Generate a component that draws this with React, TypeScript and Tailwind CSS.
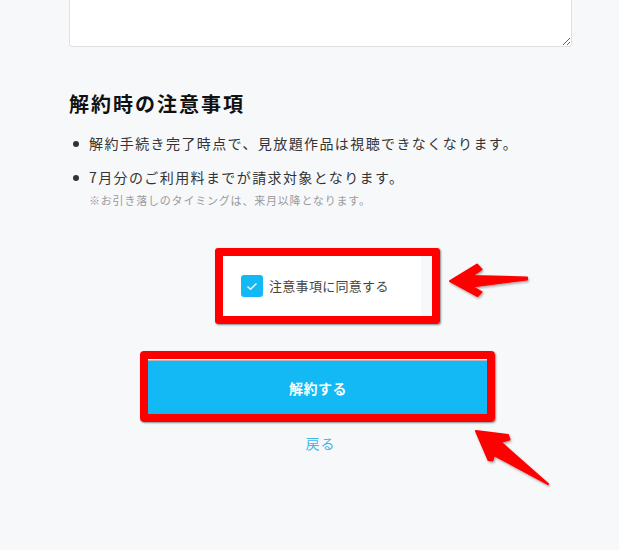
import React from 'react';

const font = { fontFamily: '"Noto Sans CJK JP", "Noto Sans", sans-serif' };

const Arrows = () => (
    <svg className="absolute left-0 top-0 pointer-events-none" width="619" height="550" viewBox="0 0 619 550">
        <defs>
            <filter id="sh" x="-20%" y="-20%" width="140%" height="140%">
                <feDropShadow dx="1" dy="1.5" stdDeviation="1" floodColor="#000" floodOpacity="0.35" />
            </filter>
        </defs>
        {/* arrow pointing to the checkbox */}
        <path
            d="M450 281 L477 264.5 L481.5 269.5 L472 276 L527 277.5 L527 279.5 L472 286.5 L481.5 292 L477.5 296 Z"
            fill="#ff0000"
            stroke="#ff0000"
            strokeWidth="2"
            strokeLinejoin="round"
            filter="url(#sh)"
        />
        {/* arrow pointing to the button */}
        <path
            d="M476 431 L508 435 L509.5 439.5 L500.5 442 L548 484 L494 455 L492.5 460.5 L488.5 460 Z"
            fill="#ff0000"
            stroke="#ff0000"
            strokeWidth="2"
            strokeLinejoin="round"
            filter="url(#sh)"
        />
    </svg>
);

export default function App() {
    const [agreed, setAgreed] = React.useState(true);

    return (
        <div className="relative min-h-screen h-[550px] overflow-hidden bg-[#f7f8fa] text-[#333]" style={font}>
            <div className="ml-[69px] w-[503px] flex flex-col">
                {/* textarea (top part scrolled off) */}
                <textarea className="block w-full h-[47px] bg-white border border-t-0 border-[#dfe1e4] rounded-b-[4px] outline-none" />

                <h2 className="mt-[43px] text-[20px] leading-[28px] font-bold tracking-[2px] text-[#111]">
                    解約時の注意事項
                </h2>

                <ul className="mt-[13px] flex flex-col gap-[10px]">
                    <li className="flex items-start">
                        <span className="mt-[9.5px] ml-[4px] w-[6px] h-[6px] rounded-full bg-[#333] shrink-0"></span>
                        <span className="ml-[10px] text-[14px] leading-[24px] tracking-[1.4px]">
                            解約手続き完了時点で、見放題作品は視聴できなくなります。
                        </span>
                    </li>
                    <li className="flex items-start">
                        <span className="mt-[9.5px] ml-[4px] w-[6px] h-[6px] rounded-full bg-[#333] shrink-0"></span>
                        <div className="ml-[10px] flex flex-col">
                            <span className="text-[14px] leading-[24px] tracking-[1.4px]">
                                7月分のご利用料までが請求対象となります。
                            </span>
                            <span className="mt-[3px] text-[11px] leading-[16px] tracking-[0.8px] text-[#9a9a9a]">
                                ※お引き落しのタイミングは、来月以降となります。
                            </span>
                        </div>
                    </li>
                </ul>

                {/* agreement checkbox */}
                <div className="mt-[44px] ml-[150px] relative w-[202px] h-[68px] bg-white">
                    <label className="flex items-center h-full pl-[22px] cursor-pointer">
                        <button
                            onClick={() => setAgreed(!agreed)}
                            className={`w-[22px] h-[22px] rounded-[3px] flex items-center justify-center ${agreed ? 'bg-[#12b9f5]' : 'bg-white border border-[#ccc]'}`}
                        >
                            {agreed && (
                                <svg width="12" height="10" viewBox="0 0 12 10">
                                    <polyline points="1.5,5.5 4.5,8.2 10.5,2.5" fill="none" stroke="#fff" strokeWidth="1.4" />
                                </svg>
                            )}
                        </button>
                        <span className="ml-[6px] text-[13px] leading-[20px] tracking-[0.3px] text-[#444]">注意事項に同意する</span>
                    </label>
                    <div className="absolute -left-[4px] -top-[4px] -right-[19px] -bottom-[4px] border-8 border-[#ff0000] rounded-[3px] shadow-[1px_1px_2px_rgba(0,0,0,0.45)] pointer-events-none"></div>
                </div>

                {/* submit button */}
                <div className="mt-[40px] ml-[79px] relative w-[340px] h-[55px]">
                    <button className="w-full h-full bg-[#12b9f5] border-t border-[#a9b9c2] text-white text-[14px] font-bold tracking-[0.5px]">
                        解約する
                    </button>
                    <div className="absolute -left-[8px] -top-[9px] -right-[7px] -bottom-[7px] border-8 border-[#ff0000] rounded-[4px] shadow-[1px_1px_2px_rgba(0,0,0,0.45)] pointer-events-none"></div>
                </div>

                <a className="mt-[18px] text-center text-[14px] leading-[20px] tracking-[1px] text-[#3db8ee] cursor-pointer">
                    戻る
                </a>
            </div>

            <Arrows />
        </div>
    );
}
